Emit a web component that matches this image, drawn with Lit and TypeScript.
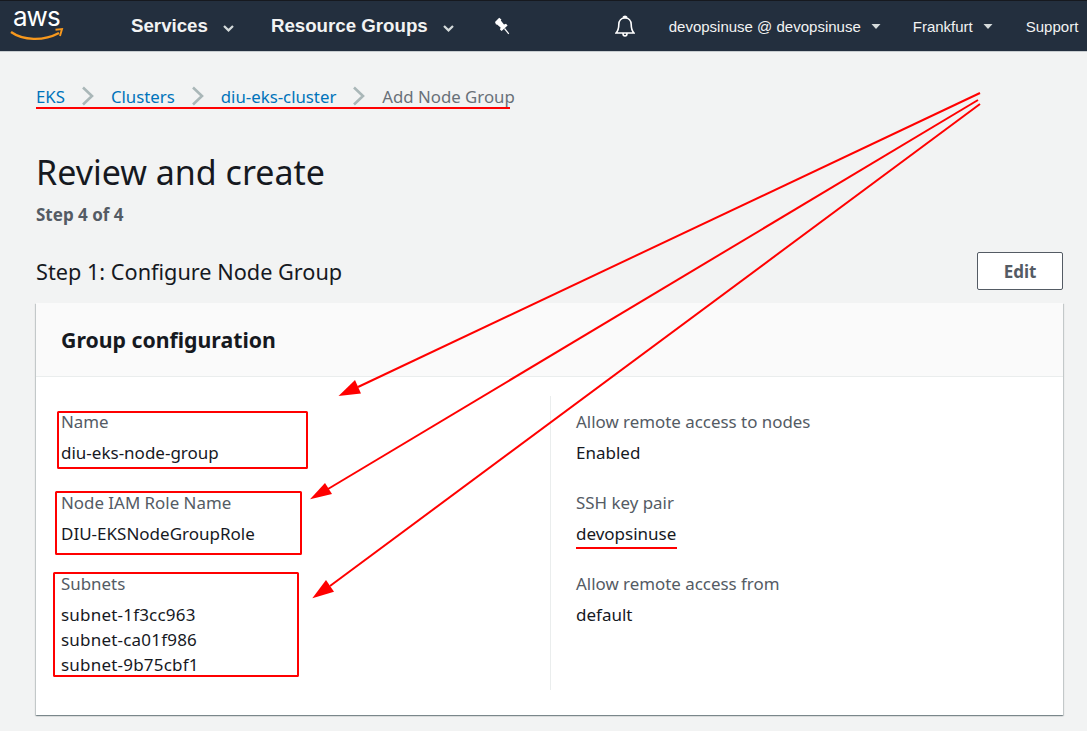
import { LitElement, html, css, svg } from "lit";
import { customElement } from "lit/decorators.js";

const chevron = html`<svg class="crumb-sep" width="14" height="20" viewBox="0 0 14 20"><path d="M2 1.5 L11 10 L2 18.5" fill="none" stroke="#aab7b8" stroke-width="2.6"/></svg>`;
const caret = html`<svg class="caret" width="11" height="7" viewBox="0 0 11 7"><path d="M1 1 L5.5 5.4 L10 1" fill="none" stroke="#d5dbdb" stroke-width="2.2"/></svg>`;
const solidCaret = html`<svg class="caret" width="10" height="5" viewBox="0 0 10 5"><path d="M.5 0 H9.5 L5 5 Z" fill="#d5dbdb"/></svg>`;

@customElement("app-root")
export class AppRoot extends LitElement {
  static styles = css`
    :host { display: block; position: relative; width: 1087px; height: 731px; overflow: hidden; background: #f2f3f3; font-family: "Noto Sans", sans-serif; color: #16191f; }
    .nav { height: 51px; box-sizing: border-box; border-top: 1px solid #16191f; background: #232f3e; display: flex; align-items: center; font-family: "Liberation Sans", sans-serif; color: #f2f3f3; box-shadow: 0 1px 0 #c8cdd0; }
    .logo { margin-left: 10px; width: 54px; height: 50px; flex: none; }
    .logo text { font-family: "Inter", sans-serif; font-size: 26px; letter-spacing: -1px; fill: #fff; }
    .main-item { display: flex; align-items: center; font-size: 18.7px; font-weight: 700; gap: 15px; }
    .main-item .caret { margin-top: 4px; }
    .services { margin-left: 67px; }
    .groups { margin-left: 37px; }
    .pin { margin-left: 40px; flex: none; }
    .bell { margin-left: 105px; flex: none; }
    .item { display: flex; align-items: center; font-size: 15px; gap: 10px; }
    .account { margin-left: 34px; }
    .region { margin-left: 32px; }
    .support { margin-left: 33px; }
    .content { padding: 0 24px 0 36px; }
    .crumbs { display: flex; align-items: center; margin-top: 33px; height: 24px; font-size: 16.8px; }
    .crumbs a { color: #0073bb; text-decoration: none; }
    .crumbs .current { color: #687078; }
    .crumb-sep { margin: 0 16px; flex: none; }
    h1 { margin: 0; font-weight: 400; font-size: 34px; line-height: 44px; margin-top: 42px; }
    .step { font-size: 17px; font-weight: 700; color: #545b64; line-height: 20px; margin-top: 11px; }
    .section-head { display: flex; justify-content: space-between; align-items: center; margin-top: 27px; height: 38px; }
    h2 { margin: 0; font-weight: 400; font-size: 21.7px; }
    button { width: 86px; height: 38px; box-sizing: border-box; background: #fff; border: 1px solid #545b64; border-radius: 2px; color: #545b64; font: 700 17px "Noto Sans", sans-serif; padding: 0; }
    .card { margin-top: 13px; background: #fff; box-shadow: 0 1px 1px 0 rgba(0,28,36,.3), 1px 1px 1px 0 rgba(0,28,36,.15), -1px 1px 1px 0 rgba(0,28,36,.15); }
    .card-head { height: 74px; box-sizing: border-box; background: #fafafa; border-bottom: 1px solid #eaeded; display: flex; align-items: center; padding-left: 25px; }
    h3 { margin: 0; font-size: 21.25px; font-weight: 700; }
    .card-body { display: grid; grid-template-columns: 514px 1fr; padding: 19px 0 25px; }
    .col { padding: 13px 0 13px 25px; display: flex; flex-direction: column; gap: 25px; }
    .col + .col { border-left: 1px solid #eaeded; }
    .label { font-size: 16.9px; line-height: 25px; color: #545b64; margin-bottom: 6px; }
    .value { font-size: 17px; line-height: 25px; }
    .wide .value { letter-spacing: 0.2px; }
    .overlay { position: absolute; inset: 0; pointer-events: none; }
  `;

  private field(label: string, values: string[], wide = false) {
    return html`<div class=${wide ? "wide" : ""}>
      <div class="label">${label}</div>
      ${values.map((v) => html`<div class="value">${v}</div>`)}
    </div>`;
  }

  render() {
    return html`
      <div class="nav">
        <svg class="logo" viewBox="0 0 54 50">
          <text x="3" y="25">aws</text>
          <path d="M1 31 C13 39.5 33 40.5 49 32" fill="none" stroke="#f7981d" stroke-width="2.4"/>
          <path d="M45.5 28.8 L52 28 L50 35" fill="none" stroke="#f7981d" stroke-width="1.9"/>
        </svg>
        <div class="main-item services">Services ${caret}</div>
        <div class="main-item groups">Resource Groups ${caret}</div>
        <svg class="pin" width="16" height="18" viewBox="0 0 16 18">
          <path d="M1 5 L5.2 .8 L7.4 2.6 L6.8 3.6 L10 7.4 L12 6.8 L13.6 8.4 L7.6 14 L6 12.6 L6.6 10.6 L3 7.4 L2 7.6 Z" fill="#fff"/>
          <path d="M10.5 11.5 L14.8 16.8" fill="none" stroke="#fff" stroke-width="1.2"/>
        </svg>
        <svg class="bell" width="20" height="23" viewBox="0 0 20 23"><path d="M1 18 C3.4 15.5 3.8 13 3.8 9.5 C3.8 5.5 6.4 2.9 10 2.9 C13.6 2.9 16.2 5.5 16.2 9.5 C16.2 13 16.6 15.5 19 18 Z M8.2 2.4 C8.8 1 11.2 1 11.8 2.4 M8 18.6 C8 21.8 12 21.8 12 18.6" fill="none" stroke="#fff" stroke-width="1.6"/></svg>
        <div class="item account">devopsinuse @ devopsinuse ${solidCaret}</div>
        <div class="item region">Frankfurt ${solidCaret}</div>
        <div class="item support">Support</div>
      </div>
      <div class="content">
        <div class="crumbs">
          <a>EKS</a>${chevron}<a>Clusters</a>${chevron}<a>diu-eks-cluster</a>${chevron}<span class="current">Add Node Group</span>
        </div>
        <h1>Review and create</h1>
        <div class="step">Step 4 of 4</div>
        <div class="section-head">
          <h2>Step 1: Configure Node Group</h2>
          <button>Edit</button>
        </div>
        <div class="card">
          <div class="card-head"><h3>Group configuration</h3></div>
          <div class="card-body">
            <div class="col">
              ${this.field("Name", ["diu-eks-node-group"])}
              ${this.field("Node IAM Role Name", ["DIU-EKSNodeGroupRole"])}
              ${this.field("Subnets", ["subnet-1f3cc963", "subnet-ca01f986", "subnet-9b75cbf1"], true)}
            </div>
            <div class="col">
              ${this.field("Allow remote access to nodes", ["Enabled"])}
              ${this.field("SSH key pair", ["devopsinuse"])}
              ${this.field("Allow remote access from", ["default"])}
            </div>
          </div>
        </div>
      </div>
      <svg class="overlay" width="1087" height="731" viewBox="0 0 1087 731" fill="none" stroke="#ff0000" stroke-width="2">
        ${svg`
          <path d="M36 108 H510"/>
          <path d="M576 548 H677"/>
          <rect x="58" y="412" width="249" height="56" rx="0.5"/>
          <rect x="56" y="492" width="245" height="62" rx="0.5"/>
          <rect x="54" y="573" width="244" height="103" rx="0.5"/>
          <path d="M980 93 L358 387"/>
          <path d="M978 100 L328 489"/>
          <path d="M980 104 L330 586"/>
          <path d="M338.5 396 L355 380 L361 393.5 Z" fill="#ff0000" stroke="none"/>
          <path d="M310 499.3 L325 483 L332 494 Z" fill="#ff0000" stroke="none"/>
          <path d="M312.3 598.3 L326 580 L334 591.7 Z" fill="#ff0000" stroke="none"/>
        `}
      </svg>
    `;
  }
}
